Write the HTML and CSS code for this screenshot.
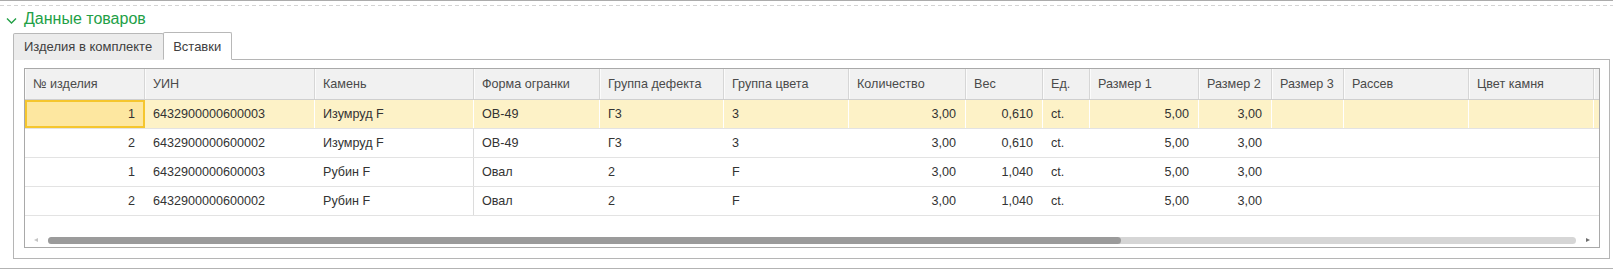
FILE: index.html
```html
<!DOCTYPE html>
<html lang="ru">
<head>
<meta charset="utf-8">
<title>Данные товаров</title>
<link rel="stylesheet" href="styles.css">
</head>
<body>
<div class="topline"></div>
<div class="dashline"></div>
<div class="group-title">
  <svg class="chevron" width="11" height="8" viewBox="0 0 11 8"><polyline points="1,1.5 5.5,6 10,1.5" fill="none" stroke="#22a046" stroke-width="1.4"/></svg>
  <span class="title-text">Данные товаров</span>
</div>
<div class="tabs">
  <div class="tab">Изделия в комплекте</div>
  <div class="tab tab-active">Вставки</div>
</div>
<div class="panel">
  <div class="grid">
    <div class="row head">
      <div class="c">№ изделия</div>
      <div class="c">УИН</div>
      <div class="c">Камень</div>
      <div class="c">Форма огранки</div>
      <div class="c">Группа дефекта</div>
      <div class="c">Группа цвета</div>
      <div class="c">Количество</div>
      <div class="c">Вес</div>
      <div class="c">Ед.</div>
      <div class="c">Размер 1</div>
      <div class="c">Размер 2</div>
      <div class="c">Размер 3</div>
      <div class="c">Рассев</div>
      <div class="c">Цвет камня</div>
      <div class="c"></div>
    </div>
    <div class="row data sel">
      <div class="c r cur">1</div>
      <div class="c">6432900000600003</div>
      <div class="c">Изумруд F</div>
      <div class="c">ОВ-49</div>
      <div class="c">Г3</div>
      <div class="c">3</div>
      <div class="c r">3,00</div>
      <div class="c r">0,610</div>
      <div class="c">ct.</div>
      <div class="c r">5,00</div>
      <div class="c r">3,00</div>
      <div class="c"></div>
      <div class="c"></div>
      <div class="c"></div>
      <div class="c"></div>
    </div>
    <div class="row data">
      <div class="c r">2</div>
      <div class="c">6432900000600002</div>
      <div class="c sep">Изумруд F</div>
      <div class="c">ОВ-49</div>
      <div class="c">Г3</div>
      <div class="c">3</div>
      <div class="c r">3,00</div>
      <div class="c r">0,610</div>
      <div class="c">ct.</div>
      <div class="c r">5,00</div>
      <div class="c r">3,00</div>
      <div class="c"></div>
      <div class="c"></div>
      <div class="c"></div>
      <div class="c"></div>
    </div>
    <div class="row data">
      <div class="c r">1</div>
      <div class="c">6432900000600003</div>
      <div class="c sep">Рубин F</div>
      <div class="c">Овал</div>
      <div class="c">2</div>
      <div class="c">F</div>
      <div class="c r">3,00</div>
      <div class="c r">1,040</div>
      <div class="c">ct.</div>
      <div class="c r">5,00</div>
      <div class="c r">3,00</div>
      <div class="c"></div>
      <div class="c"></div>
      <div class="c"></div>
      <div class="c"></div>
    </div>
    <div class="row data">
      <div class="c r">2</div>
      <div class="c">6432900000600002</div>
      <div class="c sep">Рубин F</div>
      <div class="c">Овал</div>
      <div class="c">2</div>
      <div class="c">F</div>
      <div class="c r">3,00</div>
      <div class="c r">1,040</div>
      <div class="c">ct.</div>
      <div class="c r">5,00</div>
      <div class="c r">3,00</div>
      <div class="c"></div>
      <div class="c"></div>
      <div class="c"></div>
      <div class="c"></div>
    </div>
    <div class="hscroll">
      <span class="arrow arrow-left"></span>
      <div class="track"><div class="thumb"></div></div>
      <span class="arrow arrow-right"></span>
    </div>
  </div>
</div>
<div class="bottomline"></div>
</body>
</html>
```
FILE: styles.css
```css
html, body {
  margin: 0;
  padding: 0;
  background: #fff;
}
body {
  font-family: "Liberation Sans", Arial, sans-serif;
  font-size: 12.6px;
  color: #333;
  width: 1613px;
  height: 270px;
  overflow: hidden;
}
.topline {
  height: 1px;
  background: #ababab;
}
.dashline {
  margin-top: 4px;
  height: 1px;
  background: repeating-linear-gradient(to right, #d4d4d4 0 4px, transparent 4px 7px);
}
.group-title {
  height: 26px;
  display: flex;
  align-items: center;
  padding-left: 6px;
}
.chevron {
  display: block;
  margin-top: 3px;
  margin-right: 7px;
}
.title-text {
  font-size: 16px;
  line-height: 26px;
  color: #22a046;
}
.tabs {
  display: flex;
  align-items: flex-end;
  height: 28px;
  margin-left: 13px;
  font-size: 13px;
}
.tab {
  box-sizing: border-box;
  height: 27px;
  line-height: 25px;
  padding: 0 11px 0 10px;
  border: 1px solid #b8b8b8;
  border-bottom: none;
  border-radius: 2px 2px 0 0;
  background: #ececec;
  color: #404040;
}
.tab-active {
  position: relative;
  z-index: 1;
  height: 28px;
  line-height: 27px;
  margin-left: -1px;
  padding: 0 10px 0 9px;
  background: #fff;
  border-bottom: 1px solid #fff;
}
.panel {
  margin: -1px 3px 0 13px;
  border: 1px solid #b5b5b5;
  padding: 8px 9px 10px 10px;
}
.grid {
  border: 1px solid #a9a9a9;
  width: 1574px;
}
.row {
  display: grid;
  grid-template-columns: 120px 170px 159px 126px 124px 125px 117px 77px 47px 109px 73px 72px 125px 125px 5px;
}
.c {
  box-sizing: border-box;
  padding: 0 9px 0 8px;
  white-space: nowrap;
  overflow: hidden;
}
.r {
  text-align: right;
}
.head {
  height: 31px;
  background: #f1f1f1;
  border-bottom: 1px solid #cfcfcf;
  box-sizing: border-box;
  color: #4a4a4a;
}
.head .c {
  line-height: 30px;
  border-right: 1px solid #d6d6d6;
  box-shadow: inset 1px 0 0 #fbfbfb;
}
.head .c:last-child {
  border-right: none;
}
.data {
  height: 29px;
  box-sizing: border-box;
  border-bottom: 1px solid #e3e3e3;
}
.data .c {
  line-height: 28px;
  border-right: 1px solid transparent;
}
.data .c.sep {
  border-right-color: #dcdcdc;
}
.sel {
  background: #fdf2c7;
}
.sel .c {
  border-right-color: #fff;
}
.sel .c:last-child {
  border-right: none;
}
.sel .cur {
  background: #fde7a0;
  border: 2px solid #f5c62e;
  line-height: 24px;
  padding-right: 8px;
}
.hscroll {
  box-sizing: border-box;
  height: 31px;
  padding: 21px 9px 0 9px;
  display: flex;
  align-items: flex-start;
}
.arrow {
  width: 0;
  height: 0;
  margin-top: 1px;
  border-top: 2.5px solid transparent;
  border-bottom: 2.5px solid transparent;
}
.arrow-left {
  border-right: 4px solid #c4c4c4;
  margin-right: 10px;
}
.arrow-right {
  border-left: 4px solid #6e6e6e;
  margin-left: 10px;
}
.track {
  flex: 1;
  height: 7px;
  border-radius: 4px;
  background: #d6d6d6;
}
.thumb {
  width: 1073px;
  height: 7px;
  border-radius: 4px;
  background: #9b9b9b;
}
.bottomline {
  margin-top: 9px;
  height: 1px;
  background: #b3b3b3;
}
```
